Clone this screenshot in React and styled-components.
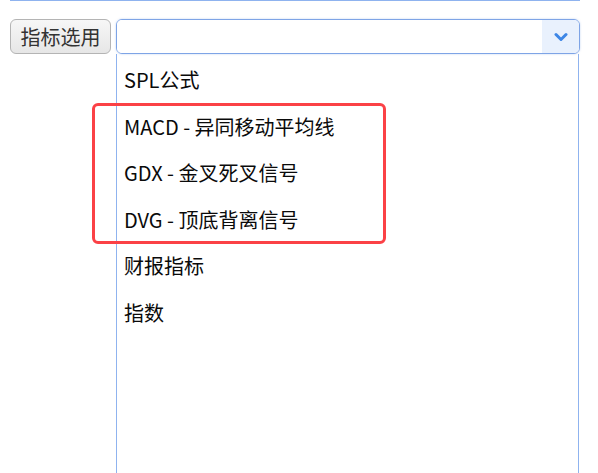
import React from 'react';
import styled, {createGlobalStyle} from 'styled-components';

const GlobalStyle = createGlobalStyle`
  html, body {
    margin: 0;
    padding: 0;
    background: #ffffff;
    font-family: "Noto Sans CJK SC", "Noto Sans", sans-serif;
  }
`
const StyledDivPage = styled.div`
  position: relative;
  width: 598px;
  height: 473px;
  overflow: hidden;
`
const StyledDivTopLine = styled.div`
  margin-left: 10px;
  width: 570px;
  height: 1px;
  background-color: #8fb3ef;
`
const StyledDivRow = styled.div`
  display: flex;
  align-items: flex-start;
  gap: 5px;
  padding: 18px 0 0 10px;
`
const StyledButton = styled.button`
  flex: none;
  width: 101px;
  height: 35px;
  padding: 0;
  border: 1px solid #b4b4b4;
  border-radius: 6px;
  background: linear-gradient(#f7f7f7, #e6e6e6);
  color: #333333;
  font-family: inherit;
  font-size: 20px;
  line-height: 33px;
`
const StyledDivSelectColumn = styled.div`
  display: flex;
  flex-direction: column;
  width: 464px;
`
const StyledDivSelect = styled.div`
  display: flex;
  height: 35px;
  box-sizing: border-box;
  border: 1px solid #7ea4e6;
  border-radius: 6px;
  overflow: hidden;
  box-shadow: 0 0 2px rgba(120, 160, 230, 0.5);
`
const StyledDivSelectValue = styled.div`
  flex: 1;
  background: #ffffff;
`
const StyledDivChevron = styled.div`
  width: 37px;
  display: flex;
  align-items: center;
  justify-content: center;
  background: #e9f1fd;
`
const StyledUlList = styled.ul`
  list-style-type: none;
  margin: 0;
  width: 463px;
  height: 430px;
  box-sizing: border-box;
  padding: 3px 0 0 7px;
  border-left: 1px solid #8fb3ef;
  border-right: 1px solid #8fb3ef;
`
const StyledLi = styled.li`
  height: 46.6px;
  line-height: 46.6px;
  font-size: 20px;
  color: #0a0a0a;
  white-space: nowrap;
`
const StyledDivHighlight = styled.div`
  position: absolute;
  left: 92px;
  top: 103px;
  width: 294px;
  height: 141px;
  box-sizing: border-box;
  border: 3px solid #fb4146;
  border-radius: 6px;
  pointer-events: none;
`

const items = ['SPL公式', 'MACD - 异同移动平均线', 'GDX - 金叉死叉信号', 'DVG - 顶底背离信号', '财报指标', '指数'];

export default function App() {
  return (
    <StyledDivPage>
      <GlobalStyle/>
      <StyledDivTopLine/>
      <StyledDivRow>
        <StyledButton>指标选用</StyledButton>
        <StyledDivSelectColumn>
          <StyledDivSelect>
            <StyledDivSelectValue/>
            <StyledDivChevron>
              <svg width="14" height="10" viewBox="0 0 14 10">
                <path d="M2 2.5 L7 7.5 L12 2.5" fill="none" stroke="#3d86e6" strokeWidth="3" strokeLinecap="round" strokeLinejoin="round"/>
              </svg>
            </StyledDivChevron>
          </StyledDivSelect>
          <StyledUlList>
            {items.map((item) => <StyledLi key={item}>{item}</StyledLi>)}
          </StyledUlList>
        </StyledDivSelectColumn>
      </StyledDivRow>
      <StyledDivHighlight/>
    </StyledDivPage>
  );
}
